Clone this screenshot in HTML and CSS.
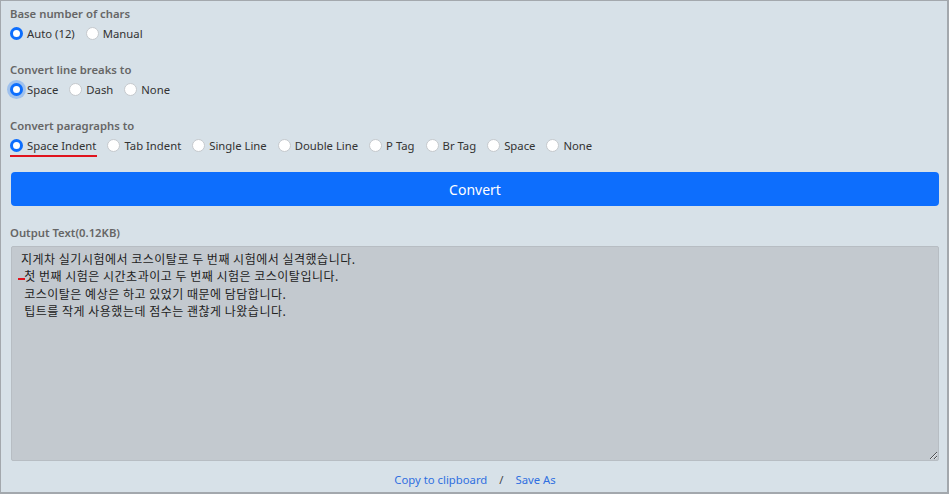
FILE: index.html
```html
<!DOCTYPE html>
<html>

<head>
  <title>Text Converter</title>
  <link rel="stylesheet" href="styles.css">
</head>

<body>
  <div class="frame">

    <div class="form-group">
      <div class="group-title">Base number of chars</div>
      <div class="radio-row">
        <label><input type="radio" name="base" checked> Auto (12)</label>
        <label><input type="radio" name="base"> Manual</label>
      </div>
    </div>

    <div class="form-group">
      <div class="group-title">Convert line breaks to</div>
      <div class="radio-row">
        <label><input type="radio" name="lb" class="focused" checked> Space</label>
        <label><input type="radio" name="lb"> Dash</label>
        <label><input type="radio" name="lb"> None</label>
      </div>
    </div>

    <div class="form-group last">
      <div class="group-title">Convert paragraphs to</div>
      <div class="radio-row">
        <label class="marked"><input type="radio" name="para" checked> Space Indent</label>
        <label><input type="radio" name="para"> Tab Indent</label>
        <label><input type="radio" name="para"> Single Line</label>
        <label><input type="radio" name="para"> Double Line</label>
        <label><input type="radio" name="para"> P Tag</label>
        <label><input type="radio" name="para"> Br Tag</label>
        <label><input type="radio" name="para"> Space</label>
        <label><input type="radio" name="para"> None</label>
      </div>
    </div>

    <button type="button" class="convert-btn">Convert</button>

    <div class="group-title output-title">Output Text(0.12KB)</div>
    <div class="output-wrap">
      <textarea class="output">지게차 실기시험에서 코스이탈로 두 번째 시험에서 실격했습니다.
 첫 번째 시험은 시간초과이고 두 번째 시험은 코스이탈입니다.
 코스이탈은 예상은 하고 있었기 때문에 담담합니다.
 팁트를 작게 사용했는데 점수는 괜찮게 나왔습니다.</textarea>
      <span class="space-mark"></span>
    </div>

    <div class="links">
      <a href="#">Copy to clipboard</a>
      <span class="sep">/</span>
      <a href="#">Save As</a>
    </div>

  </div>
</body>

</html>
```

FILE: styles.css
```css
body {
  margin: 0;
  font-family: "Noto Sans", "Noto Sans CJK KR", sans-serif;
  font-size: 11.3px;
  color: #222;
}

.frame {
  box-sizing: border-box;
  width: 949px;
  height: 494px;
  padding: 4px 8px 0 10px;
  background-color: #d7e1e8;
  border: 1px solid #a3a8ad;
  border-right-width: 2px;
  border-bottom-width: 2px;
}

.form-group {
  margin-bottom: 18px;
}

.form-group.last {
  margin-bottom: 17px;
}

.group-title {
  height: 17px;
  line-height: 17px;
  font-weight: 600;
  color: #666;
  margin-bottom: 1px;
  margin-left: -1px;
}

.radio-row {
  display: flex;
  align-items: center;
  height: 20px;
  gap: 12px;
}

.radio-row label {
  display: flex;
  align-items: center;
  gap: 4px;
  color: #333;
  white-space: nowrap;
}

.radio-row input[type="radio"] {
  appearance: none;
  margin: 0 0 0 -1px;
  width: 13px;
  height: 13px;
  border-radius: 50%;
  border: 1px solid #c5c9cd;
  background-color: #fff;
  box-sizing: border-box;
}

.radio-row input[type="radio"]:checked {
  border: 3.5px solid #0d6efd;
  background-color: #fff;
}

.radio-row input.focused {
  box-shadow: 0 0 0 3px rgba(13, 110, 253, 0.28);
}

.marked {
  position: relative;
}

.marked::after {
  content: "";
  position: absolute;
  left: -1px;
  right: -1px;
  bottom: -4px;
  height: 2px;
  background-color: #e0141e;
}

.convert-btn {
  display: block;
  width: 100%;
  height: 34px;
  border: none;
  border-radius: 4px;
  background-color: #0d6efd;
  color: #fff;
  font-family: "Noto Sans", sans-serif;
  font-size: 14px;
  cursor: pointer;
}

.output-title {
  margin-top: 18px;
  margin-bottom: 5px;
}

.output-wrap {
  position: relative;
}

.output {
  display: block;
  box-sizing: border-box;
  width: 100%;
  height: 215px;
  margin: 0;
  padding: 3px 9px;
  background-color: #c3c9cf;
  border: 1px solid #b7bdc3;
  border-radius: 2px;
  font-family: "Noto Sans CJK KR", sans-serif;
  font-size: 12px;
  letter-spacing: 0.5px;
  line-height: 17.4px;
  color: #222;
  resize: vertical;
}

.space-mark {
  position: absolute;
  left: 7px;
  top: 32px;
  width: 7px;
  height: 2px;
  background-color: #e0141e;
}

.links {
  display: flex;
  justify-content: center;
  align-items: center;
  gap: 12px;
  margin-top: 10px;
  height: 17px;
}

.links a {
  color: #2f6fe0;
  text-decoration: none;
}

.sep {
  color: #444;
}
```
